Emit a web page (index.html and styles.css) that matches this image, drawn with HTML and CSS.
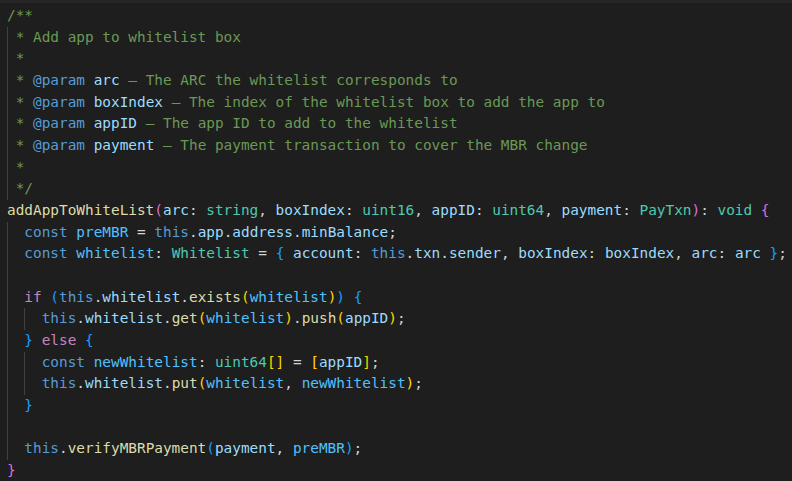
FILE: index.html
```html
<!DOCTYPE html>
<html lang="en">
<head>
<meta charset="utf-8">
<title>addAppToWhiteList</title>
<link rel="stylesheet" href="styles.css">
</head>
<body>
<div class="editor">
  <div class="topbar"></div>
  <div class="code">
    <div class="ln"><span class="c">/**</span></div>
    <div class="ln g0"><span class="c"> * Add app to whitelist box</span></div>
    <div class="ln g0"><span class="c"> *</span></div>
    <div class="ln g0"><span class="c"> * </span><span class="k">@param</span><span class="c"> </span><span class="v">arc</span><span class="c"> – The ARC the whitelist corresponds to</span></div>
    <div class="ln g0"><span class="c"> * </span><span class="k">@param</span><span class="c"> </span><span class="v">boxIndex</span><span class="c"> – The index of the whitelist box to add the app to</span></div>
    <div class="ln g0"><span class="c"> * </span><span class="k">@param</span><span class="c"> </span><span class="v">appID</span><span class="c"> – The app ID to add to the whitelist</span></div>
    <div class="ln g0"><span class="c"> * </span><span class="k">@param</span><span class="c"> </span><span class="v">payment</span><span class="c"> – The payment transaction to cover the MBR change</span></div>
    <div class="ln g0"><span class="c"> *</span></div>
    <div class="ln g0"><span class="c"> */</span></div>
    <div class="ln"><span class="f">addAppToWhiteList</span><span class="b2">(</span><span class="v">arc</span>: <span class="t">string</span>, <span class="v">boxIndex</span>: <span class="t">uint16</span>, <span class="v">appID</span>: <span class="t">uint64</span>, <span class="v">payment</span>: <span class="t">PayTxn</span><span class="b2">)</span>: <span class="t">void</span> <span class="b2">{</span></div>
    <div class="ln g0">  <span class="k">const</span> <span class="cv">preMBR</span> = <span class="k">this</span>.<span class="v">app</span>.<span class="v">address</span>.<span class="v">minBalance</span>;</div>
    <div class="ln g0">  <span class="k">const</span> <span class="cv">whitelist</span>: <span class="t">Whitelist</span> = <span class="b3">{</span> <span class="v">account</span>: <span class="k">this</span>.<span class="v">txn</span>.<span class="v">sender</span>, <span class="v">boxIndex</span>: <span class="v">boxIndex</span>, <span class="v">arc</span>: <span class="v">arc</span> <span class="b3">}</span>;</div>
    <div class="ln g0"> </div>
    <div class="ln g0">  <span class="kc">if</span> <span class="b3">(</span><span class="k">this</span>.<span class="v">whitelist</span>.<span class="f">exists</span><span class="b1">(</span><span class="cv">whitelist</span><span class="b1">)</span><span class="b3">)</span> <span class="b3">{</span></div>
    <div class="ln g0 g1">    <span class="k">this</span>.<span class="v">whitelist</span>.<span class="f">get</span><span class="b1">(</span><span class="cv">whitelist</span><span class="b1">)</span>.<span class="f">push</span><span class="b1">(</span><span class="v">appID</span><span class="b1">)</span>;</div>
    <div class="ln g0">  <span class="b3">}</span> <span class="kc">else</span> <span class="b3">{</span></div>
    <div class="ln g0 g1">    <span class="k">const</span> <span class="cv">newWhitelist</span>: <span class="t">uint64</span><span class="b1">[]</span> = <span class="b1">[</span><span class="v">appID</span><span class="b1">]</span>;</div>
    <div class="ln g0 g1">    <span class="k">this</span>.<span class="v">whitelist</span>.<span class="f">put</span><span class="b1">(</span><span class="cv">whitelist</span>, <span class="cv">newWhitelist</span><span class="b1">)</span>;</div>
    <div class="ln g0">  <span class="b3">}</span></div>
    <div class="ln g0"> </div>
    <div class="ln g0">  <span class="k">this</span>.<span class="f">verifyMBRPayment</span><span class="b3">(</span><span class="v">payment</span>, <span class="cv">preMBR</span><span class="b3">)</span>;</div>
    <div class="ln"><span class="b2">}</span></div>
  </div>
</div>
</body>
</html>
```

FILE: styles.css
```css
html, body {
  margin: 0;
  padding: 0;
  background: #1e1e1e;
}

.editor {
  width: 792px;
  height: 481px;
  overflow: hidden;
  background: #1e1e1e;
}

.topbar {
  height: 3px;
  background: #262626;
}

.code {
  padding-top: 2px;
  font-family: "DejaVu Sans Mono", "Liberation Mono", monospace;
  font-size: 14.4px;
  line-height: 21.67px;
  color: #d4d4d4;
}

.ln {
  height: 21.67px;
  padding-left: 7px;
  white-space: pre;
}

.ln.g0 {
  background-image: linear-gradient(#404040, #404040);
  background-repeat: no-repeat;
  background-size: 1px 100%;
  background-position: 7px 0;
}

.ln.g0.g1 {
  background-image: linear-gradient(#404040, #404040), linear-gradient(#404040, #404040);
  background-repeat: no-repeat, no-repeat;
  background-size: 1px 100%, 1px 100%;
  background-position: 7px 0, 24px 0;
}

.c { color: #6a9955; }
.k { color: #569cd6; }
.kc { color: #c586c0; }
.v { color: #9cdcfe; }
.cv { color: #4fc1ff; }
.f { color: #dcdcaa; }
.t { color: #4ec9b0; }
.b1 { color: #ffd700; }
.b2 { color: #da70d6; }
.b3 { color: #179fff; }
```
